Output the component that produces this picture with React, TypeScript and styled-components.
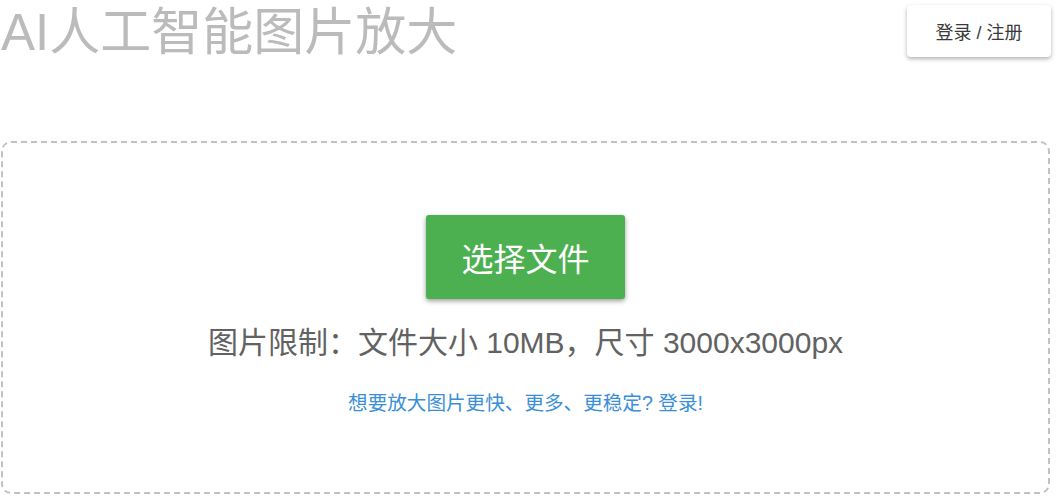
import React, { FC } from 'react';
import styled, { createGlobalStyle } from 'styled-components';

const GlobalStyle = createGlobalStyle`
  html, body {
    margin: 0;
    padding: 0;
    background: #fff;
  }

  body {
    font-family: 'Liberation Sans', 'Noto Sans CJK SC', Arial, sans-serif;
  }
`;

const Styled = {
  Page: styled.div`
    width: 1056px;
    padding: 0 6px 0 1px;
    box-sizing: border-box;
  `,
  Header: styled.header`
    display: flex;
    align-items: flex-start;
    justify-content: space-between;
    height: 66px;
  `,
  Title: styled.h1`
    margin: 0;
    font-size: 51px;
    line-height: 66px;
    font-weight: normal;
    color: #bbbbbb;
    white-space: nowrap;
  `,
  LoginButton: styled.button`
    margin: 5px -1px 0 0;
    width: 144px;
    height: 52px;
    border: none;
    border-radius: 4px;
    background: #fff;
    box-shadow: 0 2px 4px rgba(0, 0, 0, 0.3);
    font-family: inherit;
    font-size: 18px;
    color: #3a3a3a;
    cursor: pointer;
  `,
  DropZone: styled.section`
    margin-top: 75px;
    height: 353px;
    box-sizing: border-box;
    padding-top: 72px;
    border: 2px dashed #c2c2c2;
    border-radius: 10px;
    display: flex;
    flex-direction: column;
    align-items: center;
  `,
  ChooseButton: styled.button`
    width: 199px;
    height: 84px;
    border: none;
    border-radius: 3px;
    background: #4caf50;
    box-shadow: 0 2px 5px rgba(0, 0, 0, 0.4);
    font-family: inherit;
    font-size: 32px;
    color: #fff;
    cursor: pointer;
  `,
  Limits: styled.p`
    margin: 21px 0 0;
    font-size: 30px;
    line-height: 45px;
    color: #626262;
  `,
  LoginHint: styled.a`
    margin-top: 23px;
    font-size: 19.6px;
    line-height: 30px;
    color: #3a8fd8;
    text-decoration: none;
    cursor: pointer;
  `,
};

const App: FC = () => {
  return (
    <>
      <GlobalStyle />
      <Styled.Page>
        <Styled.Header>
          <Styled.Title>AI人工智能图片放大</Styled.Title>
          <Styled.LoginButton>登录 / 注册</Styled.LoginButton>
        </Styled.Header>

        <Styled.DropZone>
          <Styled.ChooseButton>选择文件</Styled.ChooseButton>
          <Styled.Limits>图片限制：文件大小 10MB，尺寸 3000x3000px</Styled.Limits>
          <Styled.LoginHint>想要放大图片更快、更多、更稳定? 登录!</Styled.LoginHint>
        </Styled.DropZone>
      </Styled.Page>
    </>
  );
};

export default App;
